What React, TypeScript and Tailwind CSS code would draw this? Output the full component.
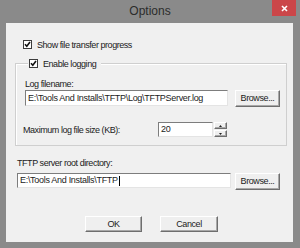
import React from "react";

const Check: React.FC = () => (
  <span className="w-[9px] h-[9px] bg-white border border-[#3c3c3c] flex items-center justify-center shrink-0">
    <svg width="7" height="7" viewBox="0 0 7 7">
      <path d="M1 3.2 L2.8 5.2 L6 1" stroke="#111" strokeWidth="1.6" fill="none" />
    </svg>
  </span>
);

const Button: React.FC<{ label?: string; className?: string; children?: React.ReactNode }> = ({
  label,
  className,
  children,
}) => (
  <div
    className={
      "flex items-center justify-center bg-[#efefef] border border-t-white border-l-white border-b-[#6e6e6e] border-r-[#6e6e6e] shadow-[inset_-1px_-1px_0_#a8a8a8] text-[9px] leading-none tracking-[-0.4px] text-[#1b1b1b] " +
      (className ?? "")
    }
  >
    {label}
    {children}
  </div>
);

const Field: React.FC<{ value: string; caret?: boolean; className?: string }> = ({ value, caret, className }) => (
  <div
    className={
      "flex items-center bg-white border border-t-[#7d7d7d] border-l-[#7d7d7d] border-b-[#e4e4e4] border-r-[#e4e4e4] pl-[2px] text-[9px] leading-none tracking-[-0.3px] text-[#1b1b1b] whitespace-nowrap overflow-hidden " +
      (className ?? "")
    }
  >
    <span>{value}</span>
    {caret ? <span className="w-px h-[10px] bg-black ml-[1px]" /> : null}
  </div>
);

const App: React.FC = () => {
  return (
    <div className="w-[300px] h-[248px] bg-[#8a8a8a] flex flex-col font-['Liberation_Sans',Arial,sans-serif]">
      <div className="relative h-[23px] flex items-center justify-center">
        <span className="text-[12px] text-[#2c2c2c] -mt-[1px]">Options</span>
        <div className="absolute top-0 right-[4px] w-[24px] h-[16px] bg-[#cb4649] flex items-center justify-center">
          <svg width="7" height="7" viewBox="0 0 7 7">
            <path d="M1 1 L6 6 M6 1 L1 6" stroke="#fff" strokeWidth="1.6" />
          </svg>
        </div>
      </div>

      <div className="ml-[6px] w-[287px] h-[219px] bg-[#f0f0f0] flex flex-col text-[9px] leading-[10px] tracking-[-0.45px] text-[#1b1b1b]">
        <div className="mt-[17px] ml-[17px] flex items-center gap-[5px] h-[9px]">
          <Check />
          <span>Show file transfer progress</span>
        </div>

        <div className="relative mt-[14px] ml-[9px] w-[272px] h-[83px] border border-[#cfcfcf] shadow-[inset_1px_1px_0_#fff] flex flex-col">
          <div className="absolute -top-[5px] left-[12px] flex items-center gap-[5px] h-[9px] bg-[#f0f0f0] pl-[1px] pr-[5px]">
            <Check />
            <span>Enable logging</span>
          </div>

          <div className="mt-[15px] ml-[9px]">Log filename:</div>
          <div className="mt-[1px] ml-[9px] flex items-start gap-[7px]">
            <Field value={"E:\\Tools And Installs\\TFTP\\Log\\TFTPServer.log"} className="w-[203px] h-[16px]" />
            <Button label="Browse..." className="w-[45px] h-[17px]" />
          </div>

          <div className="mt-[15px] ml-[7px] flex items-center h-[15px]">
            <span className="w-[135px]">Maximum log file size (KB):</span>
            <Field value="20" className="w-[55px] h-[15px]" />
            <div className="ml-[1px] flex flex-col gap-px">
              <Button className="w-[13px] h-[7px]">
                <svg width="3" height="2" viewBox="0 0 3 2">
                  <path d="M0 2 L1.5 0 L3 2 Z" fill="#222" />
                </svg>
              </Button>
              <Button className="w-[13px] h-[7px]">
                <svg width="3" height="2" viewBox="0 0 3 2">
                  <path d="M0 0 L1.5 2 L3 0 Z" fill="#222" />
                </svg>
              </Button>
            </div>
          </div>
        </div>

        <div className="mt-[12px] ml-[11px]">TFTP server root directory:</div>
        <div className="mt-[5px] ml-[11px] flex items-start gap-[4px]">
          <Field value={"E:\\Tools And Installs\\TFTP"} caret className="w-[214px] h-[15px]" />
          <Button label="Browse..." className="w-[45px] h-[17px]" />
        </div>

        <div className="mt-[26px] ml-[79px] flex gap-[18px]">
          <Button label="OK" className="w-[57px] h-[16px]" />
          <Button label="Cancel" className="w-[58px] h-[16px]" />
        </div>
      </div>
    </div>
  );
};

export default App;
